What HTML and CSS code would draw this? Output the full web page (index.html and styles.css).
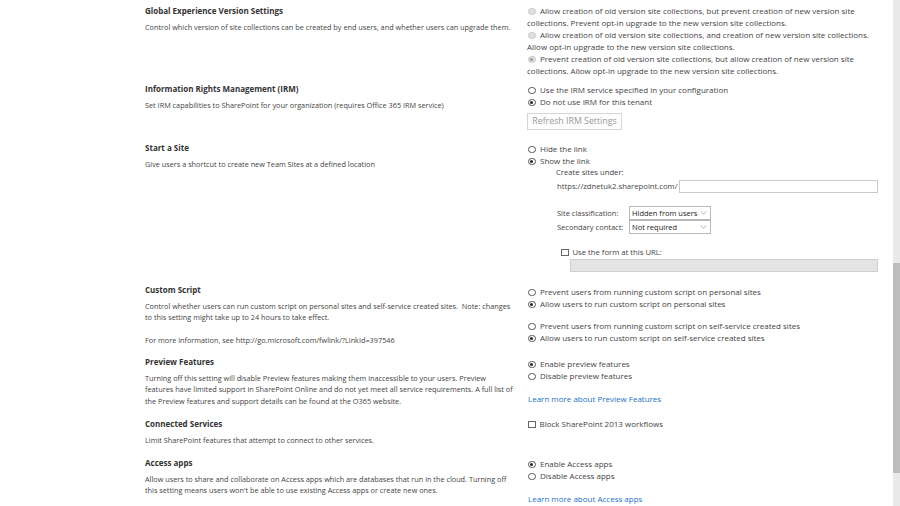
FILE: index.html
```html
<!DOCTYPE html>
<html lang="en">
<head>
<meta charset="utf-8">
<title>Settings</title>
<link rel="stylesheet" href="styles.css">
</head>
<body>
<div class="page">
  <main class="content">
    <section class="row row-gev">
      <div class="label">
        <h3>Global Experience Version Settings</h3>
        <p>Control which version of site collections can be created by end users, and whether users can upgrade them.</p>
      </div>
      <div class="opts">
        <div class="opt"><span class="radio disabled"></span>Allow creation of old version site collections, but prevent creation of new version site collections. Prevent opt-in upgrade to the new version site collections.</div>
        <div class="opt"><span class="radio disabled"></span>Allow creation of old version site collections, and creation of new version site collections. Allow opt-in upgrade to the new version site collections.</div>
        <div class="opt"><span class="radio disabled checked"></span>Prevent creation of old version site collections, but allow creation of new version site collections. Allow opt-in upgrade to the new version site collections.</div>
      </div>
    </section>

    <section class="row row-irm">
      <div class="label">
        <h3>Information Rights Management (IRM)</h3>
        <p>Set IRM capabilities to SharePoint for your organization (requires Office 365 IRM service)</p>
      </div>
      <div class="opts">
        <div class="opt"><span class="radio"></span>Use the IRM service specified in your configuration</div>
        <div class="opt"><span class="radio checked"></span>Do not use IRM for this tenant</div>
        <div class="btn">Refresh IRM Settings</div>
      </div>
    </section>

    <section class="row row-site">
      <div class="label">
        <h3>Start a Site</h3>
        <p>Give users a shortcut to create new Team Sites at a defined location</p>
      </div>
      <div class="opts">
        <div class="opt"><span class="radio"></span>Hide the link</div>
        <div class="opt"><span class="radio checked"></span>Show the link</div>
        <div class="sub">
          <div class="sub-title">Create sites under:</div>
          <div class="url-line"><span>https://zdnetuk2.sharepoint.com/</span><span class="field"></span></div>
          <div class="selects">
            <span>Site classification:</span>
            <span class="select">Hidden from users<svg class="chev" viewBox="0 0 8 5"><path d="M0.5 0.5 L4 4 L7.5 0.5" fill="none" stroke="#888" stroke-width="0.8"/></svg></span>
            <span>Secondary contact:</span>
            <span class="select">Not required<svg class="chev" viewBox="0 0 8 5"><path d="M0.5 0.5 L4 4 L7.5 0.5" fill="none" stroke="#888" stroke-width="0.8"/></svg></span>
          </div>
          <div class="check-line"><span class="checkbox"></span>Use the form at this URL:</div>
          <div class="field field-disabled"></div>
        </div>
      </div>
    </section>

    <section class="row row-script">
      <div class="label">
        <h3>Custom Script</h3>
        <p>Control whether users can run custom script on personal sites and self-service created sites.&nbsp; Note: changes to this setting might take up to 24 hours to take effect.</p>
        <p class="more">For more information, see http://go.microsoft.com/fwlink/?LinkId=397546</p>
      </div>
      <div class="opts">
        <div class="group">
          <div class="opt"><span class="radio"></span>Prevent users from running custom script on personal sites</div>
          <div class="opt"><span class="radio checked"></span>Allow users to run custom script on personal sites</div>
        </div>
        <div class="group">
          <div class="opt"><span class="radio"></span>Prevent users from running custom script on self-service created sites</div>
          <div class="opt"><span class="radio checked"></span>Allow users to run custom script on self-service created sites</div>
        </div>
      </div>
    </section>

    <section class="row row-preview">
      <div class="label">
        <h3>Preview Features</h3>
        <p>Turning off this setting will disable Preview features making them inaccessible to your users. Preview features have limited support in SharePoint Online and do not yet meet all service requirements. A full list of the Preview features and support details can be found at the O365 website.</p>
      </div>
      <div class="opts">
        <div class="opt"><span class="radio checked"></span>Enable preview features</div>
        <div class="opt"><span class="radio"></span>Disable preview features</div>
        <a class="link" href="#">Learn more about Preview Features</a>
      </div>
    </section>

    <section class="row row-conn">
      <div class="label">
        <h3>Connected Services</h3>
        <p>Limit SharePoint features that attempt to connect to other services.</p>
      </div>
      <div class="opts">
        <div class="opt"><span class="checkbox"></span>Block SharePoint 2013 workflows</div>
      </div>
    </section>

    <section class="row row-access">
      <div class="label">
        <h3>Access apps</h3>
        <p>Allow users to share and collaborate on Access apps which are databases that run in the cloud. Turning off this setting means users won't be able to use existing Access apps or create new ones.</p>
      </div>
      <div class="opts">
        <div class="opt"><span class="radio checked"></span>Enable Access apps</div>
        <div class="opt"><span class="radio"></span>Disable Access apps</div>
        <a class="link" href="#">Learn more about Access apps</a>
      </div>
    </section>
  </main>
  <div class="scrollbar"><div class="thumb"></div></div>
</div>
</body>
</html>
```

FILE: styles.css
```css
html, body {
  margin: 0;
  padding: 0;
  background: #fff;
}
body {
  font-family: "Open Sans", "Noto Sans", sans-serif;
  color: #444;
}
.page {
  display: flex;
  height: 506px;
  overflow: hidden;
}
.content {
  flex: 1;
  padding: 5px 0 0 145px;
}
.scrollbar {
  width: 7px;
  background: #e9e9e9;
  display: flex;
  flex-direction: column;
}
.thumb {
  margin-top: 263px;
  height: 210px;
  background: #bdbdbd;
}

.row {
  display: grid;
  grid-template-columns: 382px 352px;
  align-items: start;
}
.row-gev { min-height: 78px; }
.row-irm { min-height: 59px; }
.row-site { min-height: 142px; }
.row-script { min-height: 72px; }
.row-preview { min-height: 62px; }
.row-conn { min-height: 39px; }

.label h3 {
  margin: 0;
  font-size: 8px;
  line-height: 12px;
  font-weight: 700;
  color: #333;
}
.label p {
  margin: 4.5px 0 0;
  font-size: 7.3px;
  line-height: 11.5px;
  width: 368px;
  color: #444;
}
.row-gev .label p {
  margin-top: 5px;
}
.label p.more {
  margin-top: 11px;
}

.opts {
  font-size: 8px;
  line-height: 12px;
  color: #444;
}
.row-irm .opts, .row-site .opts, .row-access .opts { padding-top: 1px; }
.row-script .opts, .row-preview .opts { padding-top: 2px; }

.radio {
  display: inline-block;
  box-sizing: border-box;
  width: 7.5px;
  height: 7.5px;
  border: 1px solid #555;
  border-radius: 50%;
  margin: 0 4.5px 0 1px;
  vertical-align: -1px;
  position: relative;
  background: #fff;
}
.radio.checked::after {
  content: "";
  position: absolute;
  left: 1.25px;
  top: 1.25px;
  width: 3px;
  height: 3px;
  border-radius: 50%;
  background: #222;
}
.radio.disabled {
  border-color: #c6c6c6;
  background: #e0e0e0;
}
.radio.disabled.checked::after {
  background: #9a9a9a;
}

.checkbox {
  display: inline-block;
  box-sizing: border-box;
  width: 7.5px;
  height: 7.5px;
  border: 1px solid #666;
  background: #fff;
  margin: 0 4px 0 1px;
  vertical-align: -1px;
}

.btn {
  margin-top: 5px;
  box-sizing: border-box;
  width: 95px;
  height: 17px;
  border: 1px solid #d6d6d6;
  background: #fdfdfd;
  color: #9a9a9a;
  font-size: 8.8px;
  line-height: 15px;
  text-align: center;
  white-space: nowrap;
}

.sub {
  margin-left: 29px;
  font-size: 7.7px;
}
.sub-title {
  line-height: 11px;
}
.url-line {
  display: flex;
  align-items: center;
  width: 321px;
  height: 14px;
  margin-top: 1px;
  margin-left: 1px;
}
.field {
  display: block;
  box-sizing: border-box;
  height: 13px;
  border: 1px solid #c4cad2;
  background: #fff;
}
.url-line .field {
  flex: 1;
  margin-left: 1px;
}
.selects {
  margin-top: 13px;
  margin-left: 1px;
  display: grid;
  grid-template-columns: 72px 82px;
  align-items: center;
  font-size: 7.5px;
}
.select {
  box-sizing: border-box;
  height: 14px;
  border: 1px solid #b8b8b8;
  background: #fff;
  color: #222;
  padding-left: 2px;
  line-height: 12px;
  display: flex;
  align-items: center;
  justify-content: space-between;
  white-space: nowrap;
}
.chev {
  width: 7px;
  height: 4px;
  margin-right: 3px;
  flex: none;
}
.check-line {
  margin-top: 12px;
  margin-left: 4px;
}
.field-disabled {
  margin: 1px 0 0 14px;
  width: 308px;
  background: #e4e4e4;
  border-color: #cfcfcf;
}

.group + .group {
  margin-top: 10px;
}

.link {
  display: block;
  margin-top: 11px;
  color: #1a73c2;
  text-decoration: none;
  margin-left: 1px;
}
```
